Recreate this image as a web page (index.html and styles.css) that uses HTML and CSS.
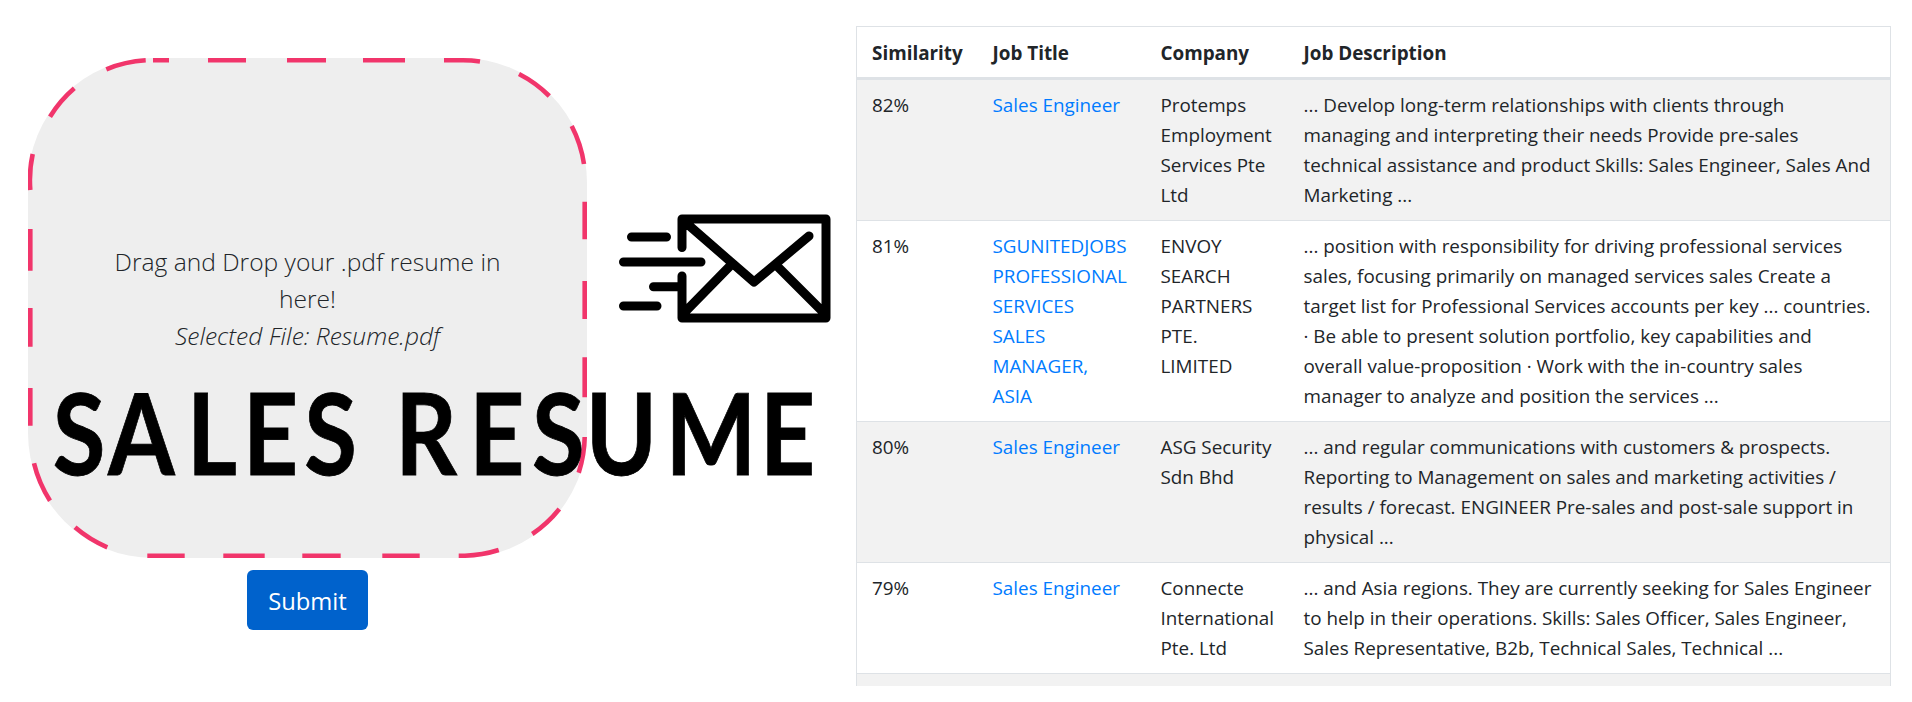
FILE: index.html
```html
<!DOCTYPE html>
<html lang="en">
<head>
<meta charset="utf-8">
<title>Sales Resume</title>
<link rel="stylesheet" href="styles.css">
</head>
<body>
<main class="page">
  <section class="upload">
    <form class="dropform">
      <div class="dropzone">
        <svg class="dashes" viewBox="28 58 559 500" aria-hidden="true">
          <path d="M153 60.3H169M208 60.3H246M287 60.3H326M363 60.3H405M444 60.3H463A122.7 122.7 0 0 1 480 61.5M519 74A122.7 122.7 0 0 1 549.3 96M571.7 126A122.7 122.7 0 0 1 584 164M584.7 201.7V239.3M584.7 281V319M584.7 357.3V397.3M584.7 437A122.7 122.7 0 0 1 578.7 472.7M559.3 509A122.7 122.7 0 0 1 532.3 534M498.7 550A122.7 122.7 0 0 1 465 555.7H458.7M419.7 555.7H382.3M340.7 555.7H302.3M264.7 555.7H223.3M184.7 555.7H147.3M107.3 547.3A122.7 122.7 0 0 1 75 527.3M50 500.7A122.7 122.7 0 0 1 34 463.3M30.3 425.7V388M30.3 346.7V308M30.3 270.7V229M30.3 190A122.7 122.7 0 0 1 32.7 154M50 116.7A122.7 122.7 0 0 1 74.3 88.3M106.3 69.3A122.7 122.7 0 0 1 145.7 60.3"/>
        </svg>
        <p class="dropzone-text">Drag and Drop your .pdf resume in<br>here!<br><em>Selected File: Resume.pdf</em></p>
      </div>
      <button class="submit" type="button">Submit</button>
    </form>
    <svg class="mail" viewBox="0 0 240 160" aria-hidden="true">
      <path d="M82 57.5V29H226V128H82V86M85 32L154 92L209 46M82 125L130 76M226 125L178 77M31.5 47H66.5M23.5 72H101M53.5 96.7H82M23.5 116H57"/>
    </svg>
    <svg class="title" viewBox="0 0 856 140" role="img" aria-label="Sales Resume">
      <text class="title-text" transform="scale(.85 1)" y="115" x="62 127 220 286 358 430 465 552 626 689 783 894">SALES RESUME</text>
    </svg>
  </section>
  <section class="results">
    <table class="jobs">
      <colgroup><col class="c1"><col class="c2"><col class="c3"><col class="c4"></colgroup>
      <thead>
        <tr><th>Similarity</th><th>Job Title</th><th>Company</th><th>Job Description</th></tr>
      </thead>
      <tbody>
        <tr>
          <td>82%</td>
          <td><a href="#">Sales Engineer</a></td>
          <td>Protemps<br>Employment<br>Services Pte<br>Ltd</td>
          <td>... Develop long-term relationships with clients through<br>managing and interpreting their needs Provide pre-sales<br>technical assistance and product Skills: Sales Engineer, Sales And<br>Marketing ...</td>
        </tr>
        <tr>
          <td>81%</td>
          <td><a href="#">SGUNITEDJOBS<br>PROFESSIONAL<br>SERVICES<br>SALES<br>MANAGER,<br>ASIA</a></td>
          <td>ENVOY<br>SEARCH<br>PARTNERS<br>PTE.<br>LIMITED</td>
          <td>... position with responsibility for driving professional services<br>sales, focusing primarily on managed services sales Create a<br>target list for Professional Services accounts per key ... countries.<br>· Be able to present solution portfolio, key capabilities and<br>overall value-proposition · Work with the in-country sales<br>manager to analyze and position the services ...</td>
        </tr>
        <tr>
          <td>80%</td>
          <td><a href="#">Sales Engineer</a></td>
          <td>ASG Security<br>Sdn Bhd</td>
          <td>... and regular communications with customers &amp; prospects.<br>Reporting to Management on sales and marketing activities /<br>results / forecast. ENGINEER Pre-sales and post-sale support in<br>physical ...</td>
        </tr>
        <tr>
          <td>79%</td>
          <td><a href="#">Sales Engineer</a></td>
          <td>Connecte<br>International<br>Pte. Ltd</td>
          <td>... and Asia regions. They are currently seeking for Sales Engineer<br>to help in their operations. Skills: Sales Officer, Sales Engineer,<br>Sales Representative, B2b, Technical Sales, Technical ...</td>
        </tr>
        <tr><td colspan="4">&nbsp;</td></tr>
      </tbody>
    </table>
  </section>
</main>
</body>
</html>
```
FILE: styles.css
```css
* { box-sizing: border-box; }
html, body { margin: 0; height: 702px; overflow: hidden; background: #fff; }
body { font-family: "Open Sans", "Noto Sans", sans-serif; color: #212529; }
.page { display: flex; align-items: flex-start; }
.upload { position: relative; width: 856px; height: 702px; flex: none; padding: 58px 0 0 28px; }
.dropform { width: 559px; display: flex; flex-direction: column; align-items: center; gap: 12px; }
.dropzone {
  position: relative; width: 559px; height: 500px; background: #eee; border-radius: 125px;
  display: flex; align-items: center; justify-content: center; padding-bottom: 20px;
}
.dashes { position: absolute; inset: 0; width: 100%; height: 100%; fill: none; stroke: #f1356b; stroke-width: 4.6; }
.dropzone-text { position: relative; margin: 0; text-align: center; font-size: 24.6px; line-height: 37px; font-weight: 300; color: #212529; }
.submit {
  width: 121px; height: 60px; border: 0; border-radius: 6px; background: #0062cc; color: #fff;
  font: 400 23.8px "Open Sans", sans-serif; padding: 2px 0 0;
}
.mail { position: absolute; left: 600px; top: 190px; width: 240px; height: 160px; fill: none; stroke: #000; stroke-width: 9; stroke-linecap: round; stroke-linejoin: round; }
.title { position: absolute; left: 0; top: 360px; width: 856px; height: 140px; }
.title-text { font-family: Lato, sans-serif; font-weight: 700; font-size: 113px; fill: #000; stroke: #000; stroke-width: 0.8; }
.results { width: 1035px; height: 660px; margin-top: 26px; overflow: hidden; flex: none; }
.jobs { width: 1035px; table-layout: fixed; border-collapse: collapse; font-size: 18.85px; line-height: 30px; white-space: nowrap; border: 1px solid #dee2e6; }
.c1 { width: 121px; } .c2 { width: 168px; } .c3 { width: 143px; }
.jobs th, .jobs td { padding: 10px 15px; text-align: left; vertical-align: top; border: 1px solid #dee2e6; border-width: 1px 0 0; }
.jobs th { font-weight: 700; border-bottom: 3px solid #dee2e6; border-top: 0; padding-top: 11px; padding-bottom: 9px; }
.jobs tbody tr:nth-child(odd) { background: #f2f2f2; }
.jobs a { color: #007bff; text-decoration: none; }
```
